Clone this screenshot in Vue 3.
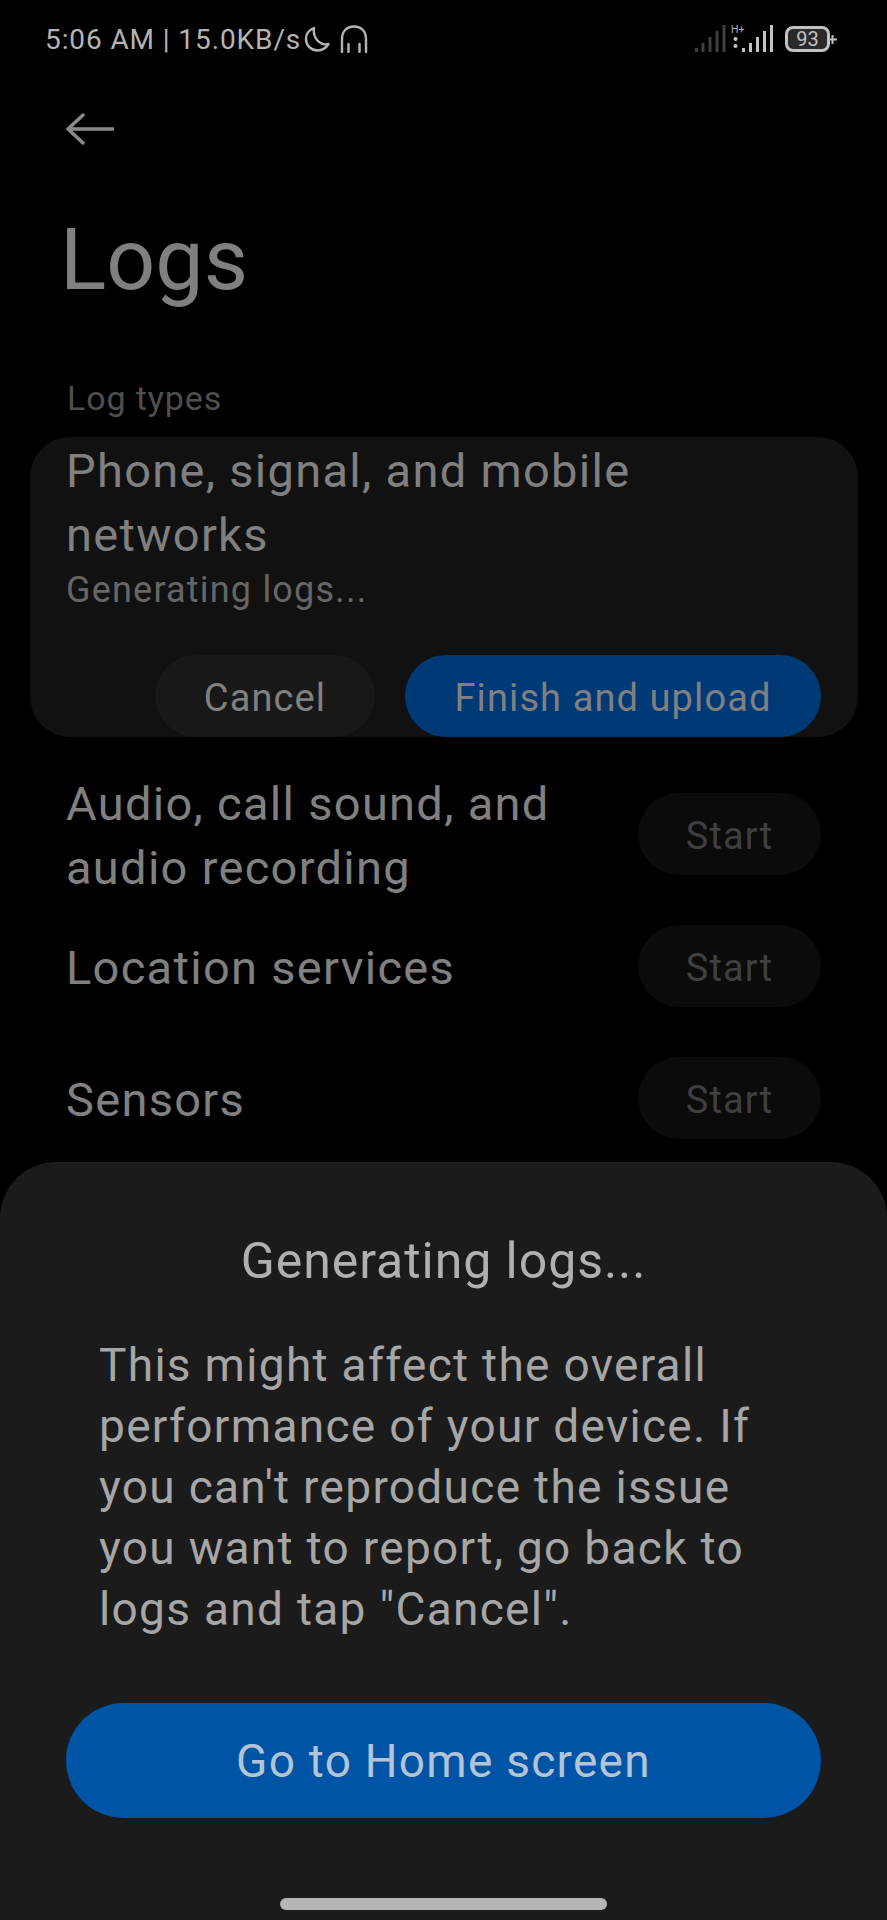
<template>
  <div class="screen">
    <header class="status-bar">
      <span class="status-text">5:06 AM | 15.0KB/s</span>
      <svg class="moon" width="26" height="26" viewBox="0 0 26 26" fill="none" stroke="#b4b4b4" stroke-width="2.4" stroke-linejoin="round"><path d="M10 2 C5 4 2 8 2 13 C2 19.500 7 24.500 13.500 24.500 C18 24.500 22 22 24.500 18 C16 20 8.500 12 10 2 Z" /></svg>
      <svg class="phones" width="28" height="28" viewBox="0 0 28 28" fill="none" stroke="#b4b4b4" stroke-width="2.4" stroke-linecap="round"><path d="M2 27 V14 C2 6 7 1.500 14 1.500 C21 1.500 26 6 26 14 V27" /><path d="M8.500 27 V19 M19.500 27 V19" /></svg>
      <div class="status-right">
        <svg width="86" height="30" viewBox="0 -1 86 30">
          <g fill="#3f3f3f">
            <rect x="0" y="23" width="3" height="4" /><rect x="6.500" y="18" width="3" height="9" /><rect x="13.500" y="12" width="3" height="15" /><rect x="20.500" y="6" width="3" height="21" /><rect x="27.500" y="0" width="3" height="27" />
          </g>
          <g fill="#c2c2c2">
            <circle cx="40.500" cy="14" r="2" /><circle cx="40.500" cy="21" r="2" />
            <rect x="47" y="23" width="3" height="4" /><rect x="54" y="18" width="3" height="9" /><rect x="61" y="12" width="3" height="15" /><rect x="68" y="6" width="3" height="21" /><rect x="75" y="0" width="3" height="27" />
          </g>
          <text x="36" y="8" class="net">H+</text>
        </svg>
        <div class="battery"><span>93</span></div>
        <svg class="plus" width="9" height="9" viewBox="0 0 9 9" stroke="#c2c2c2" stroke-width="2"><path d="M0 4.500 H9 M4.500 0 V9" /></svg>
      </div>
    </header>

    <main class="content">
      <svg class="back" width="48" height="32" viewBox="0 0 48 32" fill="none" stroke="#8a8a8a" stroke-width="3.500" stroke-linecap="round" stroke-linejoin="round"><path d="M47 16 H2 M17 2 L2 16 L17 30" /></svg>
      <h1>Logs</h1>
      <p class="section-label">Log types</p>

      <section class="active-card">
        <p class="item-title">Phone, signal, and mobile networks</p>
        <p class="item-sub">Generating logs...</p>
        <div class="card-actions">
          <button class="btn-cancel" type="button">Cancel</button>
          <button class="btn-finish" type="button">Finish and upload</button>
        </div>
      </section>

      <div class="log-list">
        <div v-for="row in rows" :key="row" class="log-row">
          <p class="item-title">{{ row }}</p>
          <button class="btn-start" type="button">Start</button>
        </div>
      </div>
    </main>

    <section class="sheet">
      <h2>Generating logs...</h2>
      <p class="sheet-body">This might affect the overall performance of your device. If you can't reproduce the issue you want to report, go back to logs and tap "Cancel".</p>
      <button class="btn-home" type="button">Go to Home screen</button>
      <div class="home-bar"></div>
    </section>
  </div>
</template>

<script setup>
const rows = ['Audio, call sound, and audio recording', 'Location services', 'Sensors']
</script>

<style>
html, body { background: #000; }
</style>

<style scoped>
.screen { position: relative; width: 887px; height: 1920px; overflow: hidden; background: #000; font-family: Roboto, "Noto Sans", sans-serif; color: #808080; }
p, h1, h2 { margin: 0; font-weight: 400; }
button { border: 0; font-family: inherit; padding: 0; }

.status-bar { display: flex; align-items: center; height: 78px; padding: 0 50px 0 45px; color: #b4b4b4; }
.status-text { font-size: 28px; letter-spacing: 0.9px; white-space: nowrap; }
.moon { margin-left: 3px; }
.phones { margin-left: 10px; }
.status-right { display: flex; align-items: center; margin-left: auto; }
.net { font-size: 10.5px; fill: #b0b0b0; font-family: Roboto, sans-serif; }
.battery { display: flex; align-items: center; justify-content: center; width: 45px; height: 26px; margin-left: 4px; box-sizing: border-box; border: 3px solid #c2c2c2; border-radius: 8px; background: #2a2a2a; font-size: 20px; color: #c2c2c2; }
.plus { margin-left: -2px; }

.content { display: flex; flex-direction: column; padding: 35px 29px 0 30px; }
.back { display: block; margin: 0 0 0 36px; }
h1 { margin: 65px 0 0 30px; font-size: 86px; line-height: 100px; color: #808080; }
.section-label { margin: 68px 0 0 37px; font-size: 34px; letter-spacing: 0.9px; line-height: 40px; color: #4f4f4f; }

.active-card { display: flex; flex-direction: column; height: 300px; margin-top: 19px; padding: 2px 37px 0 36px; box-sizing: border-box; background: #111; border-radius: 40px; overflow: hidden; }
.item-title { font-size: 47px; letter-spacing: 1.3px; line-height: 64px; color: #808080; }
.item-sub { font-size: 36px; letter-spacing: 1.2px; line-height: 46px; color: #666; }
.card-actions { display: flex; justify-content: flex-end; gap: 30px; margin-top: auto; }
.btn-cancel, .btn-finish { height: 82px; padding-top: 3px; border-radius: 41px; font-size: 38px; letter-spacing: 1.1px; color: #808080; }
.btn-cancel { width: 220px; background: #181818; }
.btn-finish { width: 416px; background: #003a76; }

.log-list { margin-top: 31px; }
.log-row { display: flex; align-items: center; justify-content: space-between; padding: 0 37px 0 36px; height: 132px; }
.log-row .item-title { width: 530px; padding-top: 3px; }
.btn-start { width: 183px; height: 82px; padding-top: 3px; border-radius: 41px; background: #0b0b0b; font-size: 38px; letter-spacing: 1.1px; color: #3f3f3f; }

.sheet { position: absolute; left: 0; right: 0; bottom: 0; height: 758px; display: flex; flex-direction: column; background: #1b1b1b; border-radius: 56px 56px 0 0; }
h2 { margin-top: 67px; font-size: 50px; letter-spacing: 0.95px; line-height: 64px; text-align: center; color: #b0b0b0; }
.sheet-body { margin: 42px 90px 0 99px; font-size: 46px; letter-spacing: 1.3px; line-height: 61px; color: #a6a6a6; }
.btn-home { flex: none; height: 115px; margin: 63px 66px 0 66px; background: #0054a6; border-radius: 58px; font-size: 46px; letter-spacing: 1.25px; color: #b4c4d6; }
.home-bar { flex: none; width: 327px; height: 12px; margin: 80px auto 0; border-radius: 6px; background: #b5b5b5; }
</style>
